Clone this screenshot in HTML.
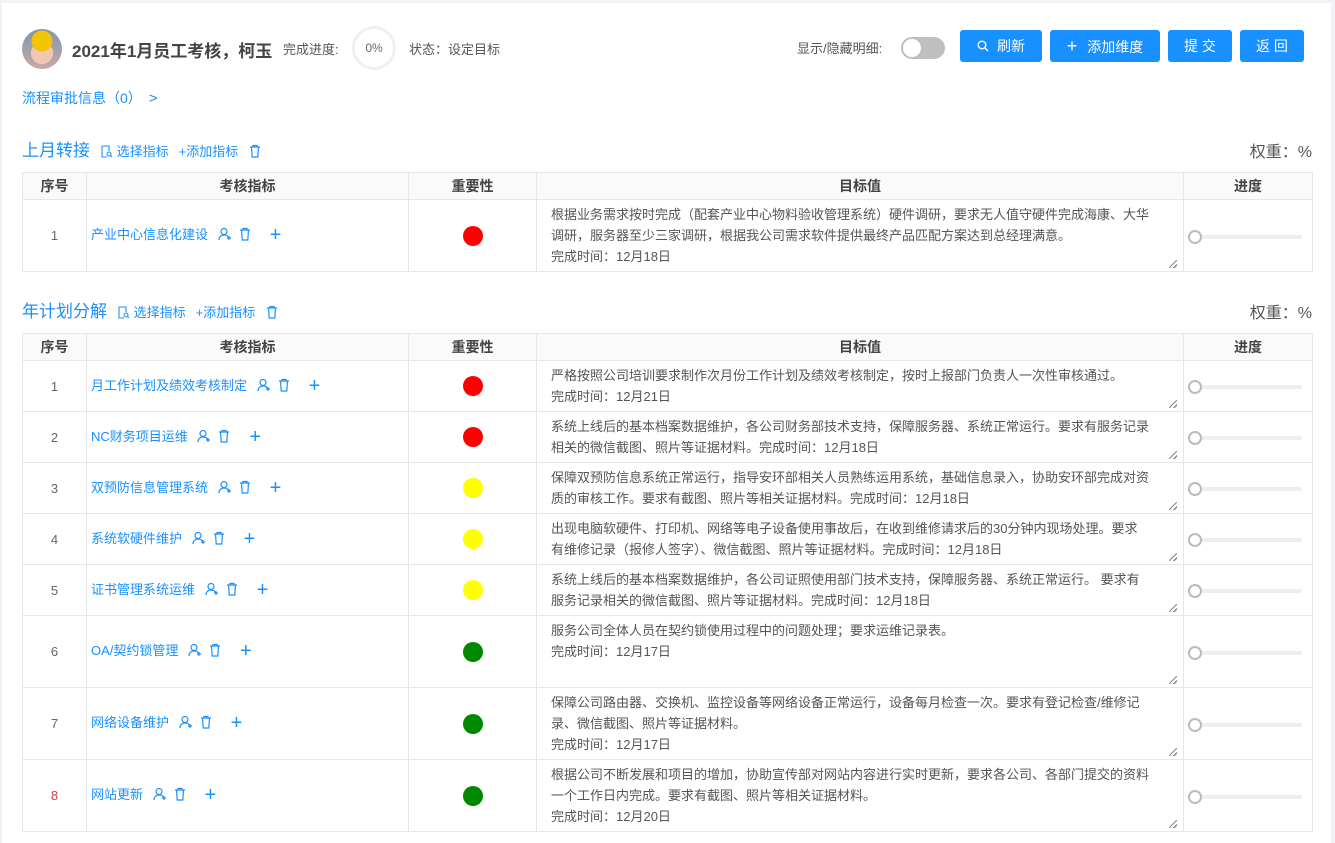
<!DOCTYPE html>
<html><head><meta charset="utf-8">
<style>
*{box-sizing:border-box;margin:0;padding:0}
body{width:1335px;height:835px;overflow:hidden;background:#f0f2f5;font-family:"Liberation Sans","Noto Sans CJK SC",sans-serif;color:#333;position:relative}
.wrap{position:absolute;left:2px;top:3px;width:1329px;height:840px;background:#fff}
.abs{position:absolute}
.blue{color:#1890ff}
.btn{position:absolute;top:30px;height:32px;background:#1890ff;color:#fff;border-radius:3px;font-size:14px;line-height:32px;text-align:center}
table{position:absolute;left:22px;border-collapse:collapse;table-layout:fixed;width:1290px}
td,th{border:1px solid #e6e6e6;font-size:13px;position:relative}
th{background:#fafafa;height:27px;font-weight:bold;font-size:14px;color:#444}
td.n{text-align:center;color:#666}
td.k{padding-left:4px;color:#1890ff;white-space:nowrap}
td.k svg{vertical-align:-2px;margin-left:6px}
td.k .p{font-size:20px;vertical-align:-2px;margin-left:18px}
td.i{text-align:center}
.dot{display:inline-block;width:20px;height:20px;border-radius:50%;vertical-align:middle}
td.t{vertical-align:top;padding:4px 34px 0 14px;line-height:21px;color:#555}
.grip{position:absolute;right:6px;bottom:3px;width:8px;height:8px;background:linear-gradient(135deg,transparent 45%,#888 45%,#888 55%,transparent 55%,transparent 75%,#888 75%,#888 85%,transparent 85%)}
.sl{position:absolute;left:4px;right:10px;top:50%;height:4px;margin-top:-1px;background:#eee;border-radius:2px}
.sl:before{content:"";position:absolute;left:0;top:-5px;width:10px;height:10px;border:2px solid #bbb;border-radius:50%;background:#fff}
.sec{position:absolute;left:22px;font-size:17px;color:#1890ff}
.op{font-size:13px;color:#1890ff;margin-left:10px}
.op svg{vertical-align:-2px}
</style></head><body>
<div class="wrap"></div>
<div class="abs" style="left:22px;top:29px;width:40px;height:40px;border-radius:50%;background:radial-gradient(circle at 50% 30%,#f3c400 0 30%,transparent 31%),radial-gradient(circle at 50% 60%,#f2c6b4 0 35%,transparent 36%),linear-gradient(#7d97ad,#c8a9a6)"></div>
<div class="abs" style="left:72px;top:37px;font-size:17px;font-weight:bold;color:#444">2021年1月员工考核，柯玉</div>
<div class="abs" style="left:283px;top:39px;font-size:13px;color:#555">完成进度:</div>
<div class="abs" style="left:352px;top:26px;width:44px;height:44px;border-radius:50%;border:3px solid #f0f0f0;font-size:12px;color:#666;text-align:center;line-height:38px">0%</div>
<div class="abs" style="left:409px;top:39px;font-size:13px;color:#555">状态：设定目标</div>
<div class="abs" style="left:797px;top:38px;font-size:13px;color:#555">显示/隐藏明细:</div>
<div class="abs" style="left:901px;top:37px;width:44px;height:22px;border-radius:11px;background:#bfbfbf"><div style="position:absolute;left:2px;top:2px;width:18px;height:18px;border-radius:50%;background:#fff"></div></div>
<div class="btn" style="left:960px;width:82px"><svg width="12" height="12" viewBox="0 0 12 12" style="vertical-align:-1px;margin-right:8px"><circle cx="5" cy="5" r="3.8" fill="none" stroke="#fff" stroke-width="1.4"/><path d="M8 8l3 3" stroke="#fff" stroke-width="1.4"/></svg>刷新</div>
<div class="btn" style="left:1050px;width:110px"><span style="font-size:18px;margin-right:10px">+</span>添加维度</div>
<div class="btn" style="left:1168px;width:64px">提 交</div>
<div class="btn" style="left:1240px;width:64px">返 回</div>
<div class="abs blue" style="left:22px;top:88px;font-size:14px">流程审批信息（0）　<span style="font-size:15px">&gt;</span></div>

<div class="sec" style="top:136px">上月转接<span class="op"><svg width="13" height="13" viewBox="0 0 13 13" fill="none" stroke="#1890ff" stroke-width="1.1"><path d="M2 1h7v5M2 1v11h5"/><circle cx="9" cy="9" r="2"/><path d="M10.5 10.5l1.5 1.5"/></svg> 选择指标</span><span class="op">+添加指标</span><span class="op"><svg width="14" height="14" viewBox="0 0 14 14" fill="none" stroke="#1890ff" stroke-width="1.2"><path d="M2 3h10M5 3V1.5h4V3M3.5 3l.7 10h5.6l.7-10"/></svg></span></div>
<div class="abs" style="right:23px;top:138px;font-size:16px;color:#555">权重：%</div>
<table style="top:172px">
<colgroup><col style="width:64px"><col style="width:322px"><col style="width:128px"><col style="width:647px"><col style="width:129px"></colgroup>
<tr><th>序号</th><th>考核指标</th><th>重要性</th><th>目标值</th><th>进度</th></tr>
<tr style="height:72px"><td class="n">1</td><td class="k">产业中心信息化建设 <svg width="14" height="14" viewBox="0 0 14 14" fill="none" stroke="#1890ff" stroke-width="1.2"><circle cx="6" cy="4.5" r="3"/><path d="M1 13c0-3 2-5 5-5s4 1 5 3M11 9v4M9 11h4"/></svg><svg width="14" height="14" viewBox="0 0 14 14" fill="none" stroke="#1890ff" stroke-width="1.2"><path d="M2 3h10M5 3V1.5h4V3M3.5 3l.7 10h5.6l.7-10"/></svg><span class="p">+</span></td><td class="i"><span class="dot" style="background:#f00"></span></td><td class="t">根据业务需求按时完成（配套产业中心物料验收管理系统）硬件调研，要求无人值守硬件完成海康、大华调研，服务器至少三家调研，根据我公司需求软件提供最终产品匹配方案达到总经理满意。<br>完成时间：12月18日<div class="grip"></div></td><td><div class="sl"></div></td></tr>
</table>

<div class="sec" style="top:297px">年计划分解<span class="op"><svg width="13" height="13" viewBox="0 0 13 13" fill="none" stroke="#1890ff" stroke-width="1.1"><path d="M2 1h7v5M2 1v11h5"/><circle cx="9" cy="9" r="2"/><path d="M10.5 10.5l1.5 1.5"/></svg> 选择指标</span><span class="op">+添加指标</span><span class="op"><svg width="14" height="14" viewBox="0 0 14 14" fill="none" stroke="#1890ff" stroke-width="1.2"><path d="M2 3h10M5 3V1.5h4V3M3.5 3l.7 10h5.6l.7-10"/></svg></span></div>
<div class="abs" style="right:23px;top:299px;font-size:16px;color:#555">权重：%</div>
<table style="top:333px">
<colgroup><col style="width:64px"><col style="width:322px"><col style="width:128px"><col style="width:647px"><col style="width:129px"></colgroup>
<tr><th>序号</th><th>考核指标</th><th>重要性</th><th>目标值</th><th>进度</th></tr>
<tr style="height:51px"><td class="n">1</td><td class="k">月工作计划及绩效考核制定 <svg width="14" height="14" viewBox="0 0 14 14" fill="none" stroke="#1890ff" stroke-width="1.2"><circle cx="6" cy="4.5" r="3"/><path d="M1 13c0-3 2-5 5-5s4 1 5 3M11 9v4M9 11h4"/></svg><svg width="14" height="14" viewBox="0 0 14 14" fill="none" stroke="#1890ff" stroke-width="1.2"><path d="M2 3h10M5 3V1.5h4V3M3.5 3l.7 10h5.6l.7-10"/></svg><span class="p">+</span></td><td class="i"><span class="dot" style="background:#f00"></span></td><td class="t">严格按照公司培训要求制作次月份工作计划及绩效考核制定，按时上报部门负责人一次性审核通过。<br>完成时间：12月21日<div class="grip"></div></td><td><div class="sl"></div></td></tr>
<tr style="height:51px"><td class="n">2</td><td class="k">NC财务项目运维 <svg width="14" height="14" viewBox="0 0 14 14" fill="none" stroke="#1890ff" stroke-width="1.2"><circle cx="6" cy="4.5" r="3"/><path d="M1 13c0-3 2-5 5-5s4 1 5 3M11 9v4M9 11h4"/></svg><svg width="14" height="14" viewBox="0 0 14 14" fill="none" stroke="#1890ff" stroke-width="1.2"><path d="M2 3h10M5 3V1.5h4V3M3.5 3l.7 10h5.6l.7-10"/></svg><span class="p">+</span></td><td class="i"><span class="dot" style="background:#f00"></span></td><td class="t">系统上线后的基本档案数据维护，各公司财务部技术支持，保障服务器、系统正常运行。要求有服务记录相关的微信截图、照片等证据材料。完成时间：12月18日<div class="grip"></div></td><td><div class="sl"></div></td></tr>
<tr style="height:51px"><td class="n">3</td><td class="k">双预防信息管理系统 <svg width="14" height="14" viewBox="0 0 14 14" fill="none" stroke="#1890ff" stroke-width="1.2"><circle cx="6" cy="4.5" r="3"/><path d="M1 13c0-3 2-5 5-5s4 1 5 3M11 9v4M9 11h4"/></svg><svg width="14" height="14" viewBox="0 0 14 14" fill="none" stroke="#1890ff" stroke-width="1.2"><path d="M2 3h10M5 3V1.5h4V3M3.5 3l.7 10h5.6l.7-10"/></svg><span class="p">+</span></td><td class="i"><span class="dot" style="background:#ff0"></span></td><td class="t">保障双预防信息系统正常运行，指导安环部相关人员熟练运用系统，基础信息录入，协助安环部完成对资质的审核工作。要求有截图、照片等相关证据材料。完成时间：12月18日<div class="grip"></div></td><td><div class="sl"></div></td></tr>
<tr style="height:51px"><td class="n">4</td><td class="k">系统软硬件维护 <svg width="14" height="14" viewBox="0 0 14 14" fill="none" stroke="#1890ff" stroke-width="1.2"><circle cx="6" cy="4.5" r="3"/><path d="M1 13c0-3 2-5 5-5s4 1 5 3M11 9v4M9 11h4"/></svg><svg width="14" height="14" viewBox="0 0 14 14" fill="none" stroke="#1890ff" stroke-width="1.2"><path d="M2 3h10M5 3V1.5h4V3M3.5 3l.7 10h5.6l.7-10"/></svg><span class="p">+</span></td><td class="i"><span class="dot" style="background:#ff0"></span></td><td class="t">出现电脑软硬件、打印机、网络等电子设备使用事故后，在收到维修请求后的30分钟内现场处理。要求有维修记录（报修人签字）、微信截图、照片等证据材料。完成时间：12月18日<div class="grip"></div></td><td><div class="sl"></div></td></tr>
<tr style="height:51px"><td class="n">5</td><td class="k">证书管理系统运维 <svg width="14" height="14" viewBox="0 0 14 14" fill="none" stroke="#1890ff" stroke-width="1.2"><circle cx="6" cy="4.5" r="3"/><path d="M1 13c0-3 2-5 5-5s4 1 5 3M11 9v4M9 11h4"/></svg><svg width="14" height="14" viewBox="0 0 14 14" fill="none" stroke="#1890ff" stroke-width="1.2"><path d="M2 3h10M5 3V1.5h4V3M3.5 3l.7 10h5.6l.7-10"/></svg><span class="p">+</span></td><td class="i"><span class="dot" style="background:#ff0"></span></td><td class="t">系统上线后的基本档案数据维护，各公司证照使用部门技术支持，保障服务器、系统正常运行。 要求有服务记录相关的微信截图、照片等证据材料。完成时间：12月18日<div class="grip"></div></td><td><div class="sl"></div></td></tr>
<tr style="height:72px"><td class="n">6</td><td class="k">OA/契约锁管理 <svg width="14" height="14" viewBox="0 0 14 14" fill="none" stroke="#1890ff" stroke-width="1.2"><circle cx="6" cy="4.5" r="3"/><path d="M1 13c0-3 2-5 5-5s4 1 5 3M11 9v4M9 11h4"/></svg><svg width="14" height="14" viewBox="0 0 14 14" fill="none" stroke="#1890ff" stroke-width="1.2"><path d="M2 3h10M5 3V1.5h4V3M3.5 3l.7 10h5.6l.7-10"/></svg><span class="p">+</span></td><td class="i"><span class="dot" style="background:#080"></span></td><td class="t">服务公司全体人员在契约锁使用过程中的问题处理；要求运维记录表。<br>完成时间：12月17日<div class="grip"></div></td><td><div class="sl"></div></td></tr>
<tr style="height:72px"><td class="n">7</td><td class="k">网络设备维护 <svg width="14" height="14" viewBox="0 0 14 14" fill="none" stroke="#1890ff" stroke-width="1.2"><circle cx="6" cy="4.5" r="3"/><path d="M1 13c0-3 2-5 5-5s4 1 5 3M11 9v4M9 11h4"/></svg><svg width="14" height="14" viewBox="0 0 14 14" fill="none" stroke="#1890ff" stroke-width="1.2"><path d="M2 3h10M5 3V1.5h4V3M3.5 3l.7 10h5.6l.7-10"/></svg><span class="p">+</span></td><td class="i"><span class="dot" style="background:#080"></span></td><td class="t">保障公司路由器、交换机、监控设备等网络设备正常运行，设备每月检查一次。要求有登记检查/维修记录、微信截图、照片等证据材料。<br>完成时间：12月17日<div class="grip"></div></td><td><div class="sl"></div></td></tr>
<tr style="height:72px"><td class="n" style="color:#c44">8</td><td class="k">网站更新 <svg width="14" height="14" viewBox="0 0 14 14" fill="none" stroke="#1890ff" stroke-width="1.2"><circle cx="6" cy="4.5" r="3"/><path d="M1 13c0-3 2-5 5-5s4 1 5 3M11 9v4M9 11h4"/></svg><svg width="14" height="14" viewBox="0 0 14 14" fill="none" stroke="#1890ff" stroke-width="1.2"><path d="M2 3h10M5 3V1.5h4V3M3.5 3l.7 10h5.6l.7-10"/></svg><span class="p">+</span></td><td class="i"><span class="dot" style="background:#080"></span></td><td class="t">根据公司不断发展和项目的增加，协助宣传部对网站内容进行实时更新，要求各公司、各部门提交的资料一个工作日内完成。要求有截图、照片等相关证据材料。<br>完成时间：12月20日<div class="grip"></div></td><td><div class="sl"></div></td></tr>
</table>
</body></html>
